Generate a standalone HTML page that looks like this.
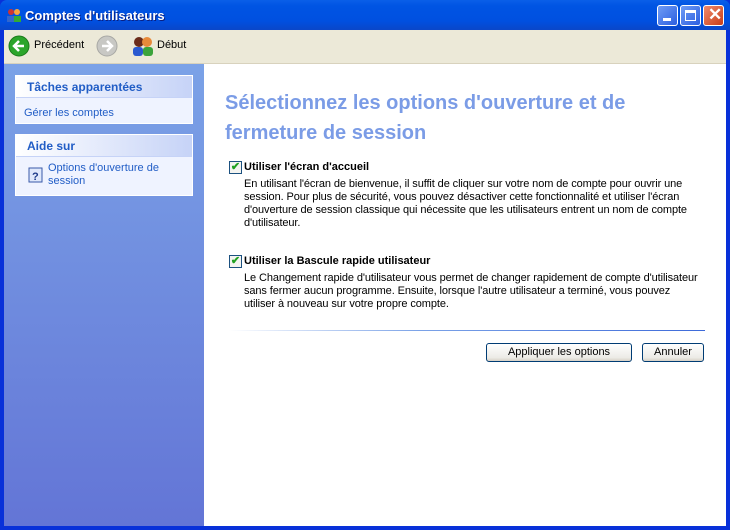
<!DOCTYPE html>
<html><head><meta charset="utf-8"><style>
*{margin:0;padding:0;box-sizing:border-box}
body{width:730px;height:530px;overflow:hidden;font-family:"Liberation Sans",sans-serif;font-size:11px;background:#0831d9;position:relative}
.title{position:absolute;left:0;top:0;width:730px;height:30px;background:linear-gradient(#0a5fe8,#0054e3 20%,#0050e0 70%,#0a47c8);border-radius:7px 7px 0 0}
.title span{position:absolute;left:25px;top:8px;color:#fff;font-weight:bold;font-size:13px;text-shadow:1px 1px #0a1f80}
.btn{position:absolute;top:5px;width:21px;height:21px;border:1px solid #fff;border-radius:3px;background:linear-gradient(135deg,#6f9cf5,#2c5fe0)}
.frame{position:absolute;left:4px;top:30px;width:722px;height:496px;background:#fff}
.tb{position:absolute;left:0;top:0;width:722px;height:34px;background:#ece9d8;border-bottom:1px solid #d8d2bd}
.lp{position:absolute;left:0;top:34px;width:200px;height:462px;background:linear-gradient(#7ba2e7,#6375d6)}
.box{position:absolute;left:11px;width:178px;background:#eff3ff;border:1px solid #fff}
.box .h{height:22px;background:linear-gradient(90deg,#fff,#c6d3f7);color:#215dc6;font-weight:bold;font-size:12px;padding:4px 0 0 11px;border-bottom:1px solid #c6d3f7}
.box a{color:#215dc6;text-decoration:none}
h1{position:absolute;left:221px;top:58px;width:470px;color:#7b9ce6;font-size:20px;line-height:30px;font-weight:bold}
.opt{position:absolute;left:225px;width:490px}
.cb{position:absolute;left:0;top:0;width:13px;height:13px;border:1px solid #1c5180;background:#f4f4f0;color:#21a121;font-size:11px;line-height:11px;text-align:center;font-weight:bold}
.opt b{position:absolute;left:15px;top:0;font-size:11px;color:#000}
.opt p{position:absolute;left:15px;top:17px;width:478px;line-height:13px;color:#000;letter-spacing:-0.1px}
.pb{position:absolute;top:343px;height:19px;border:1px solid #003c74;border-radius:3px;background:linear-gradient(#fff,#ecebe6 80%,#d6d0c5);text-align:center;line-height:17px;color:#000}
</style></head><body>
<div class="title"><svg style="position:absolute;left:6px;top:7px" width="16" height="16"><circle cx="5" cy="5" r="3" fill="#c33"/><circle cx="11" cy="5" r="3" fill="#f9a33b"/><rect x="1" y="9" width="7" height="6" fill="#36c"/><rect x="8" y="9" width="7" height="6" fill="#3a3"/></svg><span>Comptes d'utilisateurs</span>
<div class="btn" style="left:657px"><div style="position:absolute;left:5px;top:12px;width:8px;height:3px;background:#fff"></div></div>
<div class="btn" style="left:680px"><div style="position:absolute;left:4px;top:4px;width:11px;height:11px;border:1px solid #fff;border-top-width:3px"></div></div>
<div class="btn" style="left:703px;background:linear-gradient(135deg,#f08a6c,#c83d18)"><span style="left:4px;top:-1px;font-size:17px;text-shadow:none;color:#fff">✕</span></div>
</div>
<div class="frame">
<div class="tb">
<svg style="position:absolute;left:4px;top:5px" width="22" height="22"><circle cx="11" cy="11" r="10" fill="#2ba52b" stroke="#1b7a1b"/><path d="M16 11H7M11 6l-5 5 5 5" stroke="#fff" stroke-width="2.5" fill="none"/></svg>
<span style="position:absolute;left:30px;top:9px">Précédent</span>
<svg style="position:absolute;left:92px;top:5px" width="22" height="22"><circle cx="11" cy="11" r="10" fill="#c8c8c4" stroke="#a8a8a4"/><path d="M6 11h9M11 6l5 5-5 5" stroke="#fff" stroke-width="2.5" fill="none"/></svg>
<svg style="position:absolute;left:127px;top:5px" width="24" height="22"><circle cx="8" cy="7" r="5" fill="#6a2b1a"/><circle cx="16" cy="7" r="5" fill="#e88a3a"/><rect x="2" y="12" width="10" height="9" rx="3" fill="#2a5ad0"/><rect x="12" y="12" width="10" height="9" rx="3" fill="#3ba33b"/></svg>
<span style="position:absolute;left:153px;top:9px">Début</span>
</div>
<div class="lp">
<div class="box" style="top:11px;height:49px"><div class="h">Tâches apparentées</div><div style="padding:9px 0 0 8px"><a>Gérer les comptes</a></div></div>
<div class="box" style="top:70px;height:62px"><div class="h">Aide sur</div>
<svg style="position:absolute;left:12px;top:32px" width="15" height="16"><rect x="1" y="1" width="13" height="14" fill="#dfe8fb" stroke="#3a5aa8"/><text x="4" y="13" font-size="11" font-weight="bold" fill="#1c3a8a" font-family="Liberation Sans">?</text></svg>
<div style="position:absolute;left:32px;top:27px;line-height:13px"><a>Options d'ouverture de<br>session</a></div></div>
</div>
<h1>Sélectionnez les options d'ouverture et de fermeture de session</h1>
<div class="opt" style="top:131px"><div class="cb">✔</div><b>Utiliser l'écran d'accueil</b><p>En utilisant l'écran de bienvenue, il suffit de cliquer sur votre nom de compte pour ouvrir une<br>session. Pour plus de sécurité, vous pouvez désactiver cette fonctionnalité et utiliser l'écran<br>d'ouverture de session classique qui nécessite que les utilisateurs entrent un nom de compte<br>d'utilisateur.</p></div>
<div class="opt" style="top:225px"><div class="cb">✔</div><b>Utiliser la Bascule rapide utilisateur</b><p>Le Changement rapide d'utilisateur vous permet de changer rapidement de compte d'utilisateur<br>sans fermer aucun programme. Ensuite, lorsque l'autre utilisateur a terminé, vous pouvez<br>utiliser à nouveau sur votre propre compte.</p></div>
<div style="position:absolute;left:225px;top:300px;width:476px;height:1px;background:linear-gradient(90deg,#fff,#7ba2e7 40%,#3d6ad9)"></div>
</div>
<div class="pb" style="left:486px;width:146px">Appliquer les options</div>
<div class="pb" style="left:642px;width:62px">Annuler</div>
</body></html>
